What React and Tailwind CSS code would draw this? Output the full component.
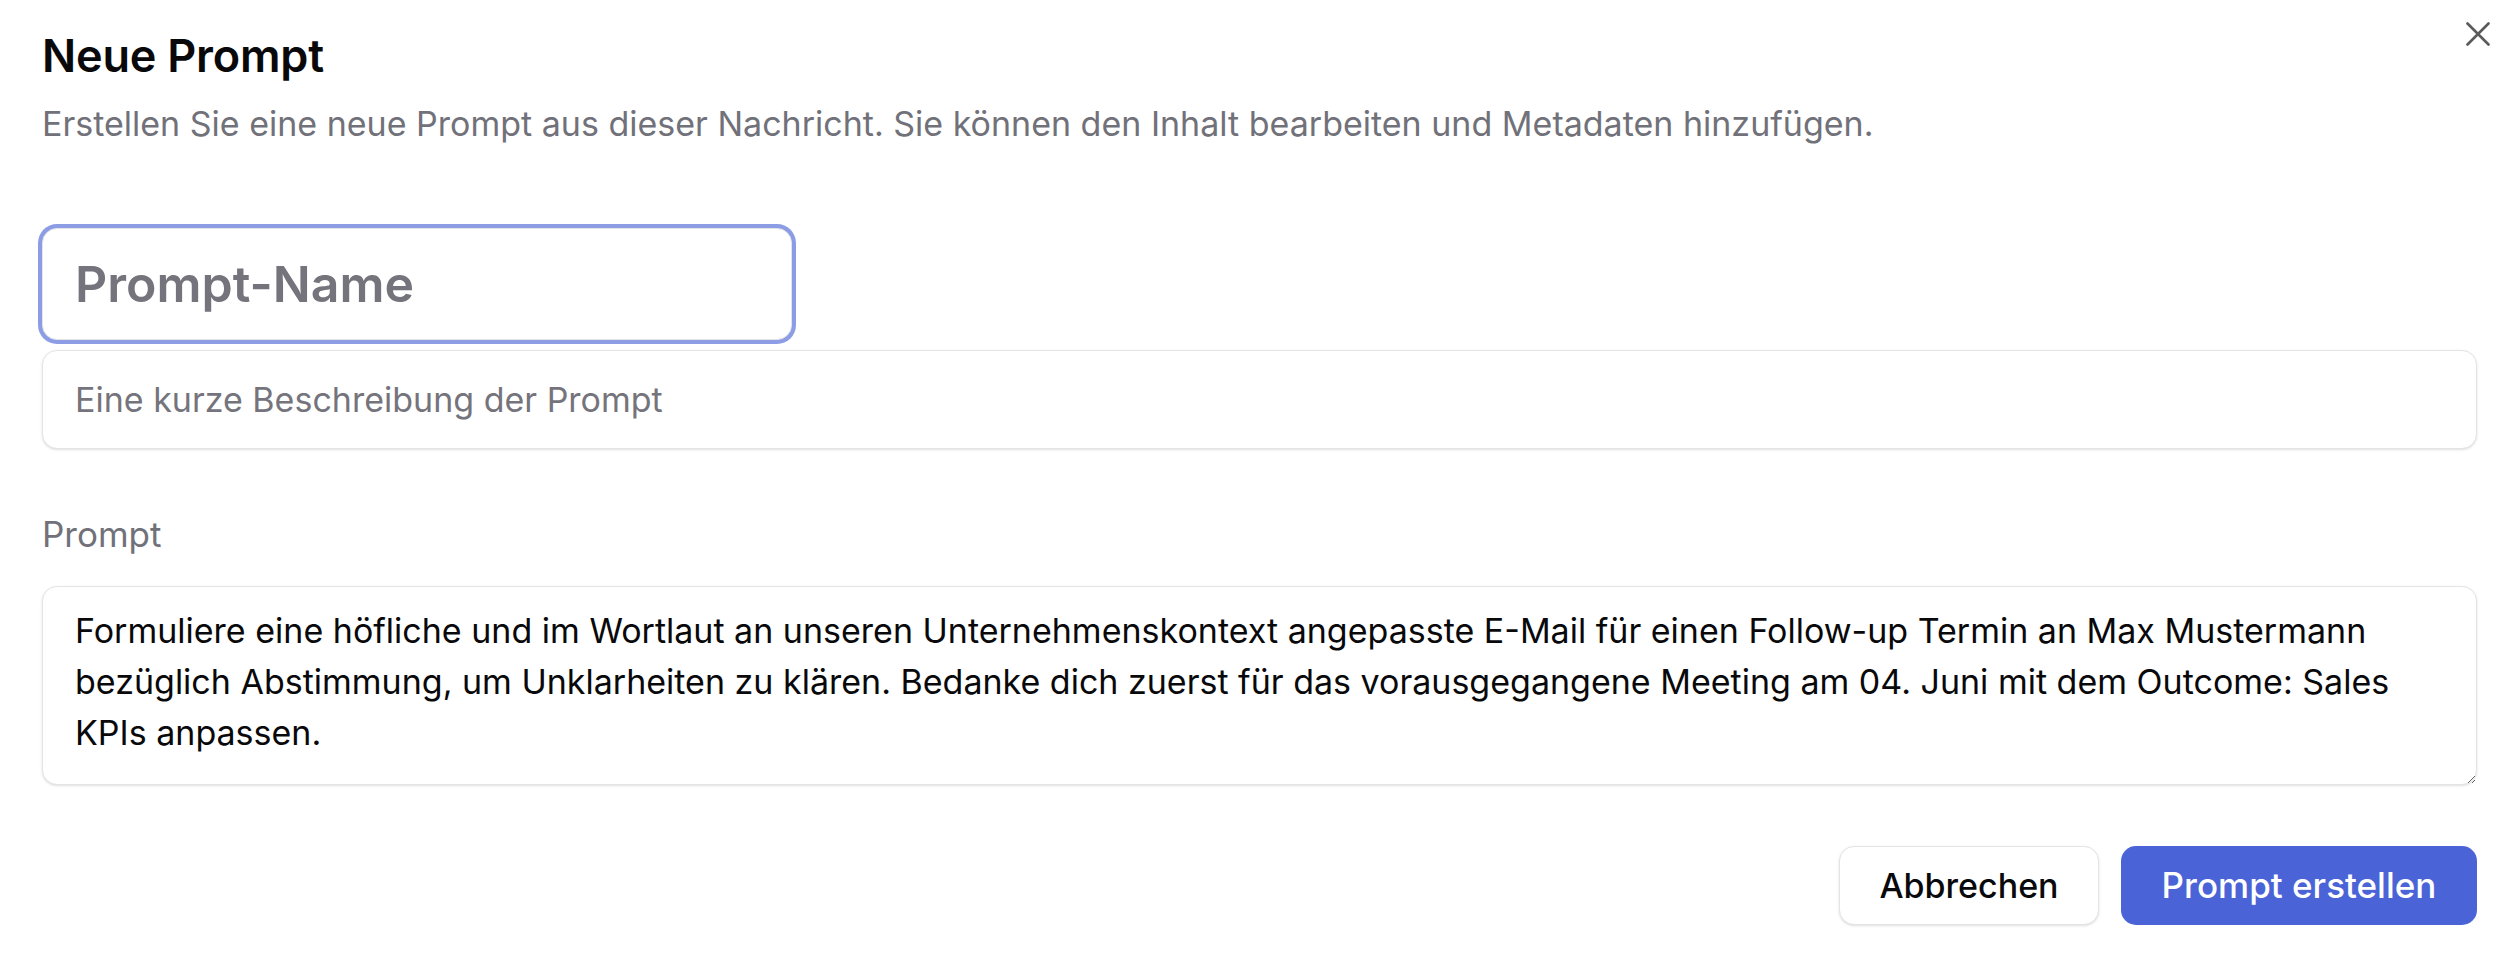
import { useState } from "react";

const PROMPT_TEXT =
  "Formuliere eine höfliche und im Wortlaut an unseren Unternehmenskontext angepasste E-Mail für einen Follow-up Termin an Max Mustermann bezüglich Abstimmung, um Unklarheiten zu klären. Bedanke dich zuerst für das vorausgegangene Meeting am 04. Juni mit dem Outcome: Sales KPIs anpassen.";

export default function App() {
  const [name, setName] = useState("");
  const [desc, setDesc] = useState("");
  const [text, setText] = useState(PROMPT_TEXT);

  return (
    <div className="relative min-h-screen w-full bg-white pl-[42px] pr-[39px] pt-[29px] font-['Inter','Liberation_Sans',sans-serif] text-[#09090b]">
      {/* Close */}
      <button className="absolute right-[26px] top-[22px] text-[#5a5a5a]" aria-label="Schließen">
        <svg width="24" height="24" viewBox="0 0 24 24" fill="none" stroke="currentColor" strokeWidth="2.6" strokeLinecap="round">
          <path d="M1.5 1.5 22.5 22.5" />
          <path d="M22.5 1.5 1.5 22.5" />
        </svg>
      </button>

      {/* Header */}
      <h2 className="text-[45px] font-semibold leading-[53px] tracking-[-0.2px]">Neue Prompt</h2>
      <p className="mt-[18px] text-[34px] leading-[48px] text-[#71717a]">
        Erstellen Sie eine neue Prompt aus dieser Nachricht. Sie können den Inhalt bearbeiten und Metadaten hinzufügen.
      </p>

      {/* Name */}
      <input
        type="text"
        value={name}
        onChange={(e) => setName(e.target.value)}
        placeholder="Prompt-Name"
        className="mt-[80px] block h-[112px] w-[750px] rounded-[15px] border border-[#e4e4e7] bg-white px-[32px] text-[50px] font-semibold text-[#09090b] shadow-sm outline-none ring-4 ring-[#8c9de6] placeholder:text-[#75747c]"
      />

      {/* Description */}
      <input
        type="text"
        value={desc}
        onChange={(e) => setDesc(e.target.value)}
        placeholder="Eine kurze Beschreibung der Prompt"
        className="mt-[10px] block h-[99px] w-full rounded-[15px] border border-[#e4e4e7] bg-white px-[32px] text-[34px] text-[#09090b] shadow-sm outline-none placeholder:text-[#75747c]"
      />

      {/* Prompt */}
      <label className="mt-[61px] block text-[35px] leading-[48px] text-[#71717a]">Prompt</label>
      <textarea
        value={text}
        onChange={(e) => setText(e.target.value)}
        className="mt-[28px] block h-[199px] w-full rounded-[15px] border border-[#e4e4e7] bg-white px-[32px] pt-[18px] text-[34px] leading-[51px] text-[#09090b] shadow-sm outline-none"
      />

      {/* Actions */}
      <div className="mt-[61px] flex justify-end gap-[22px]">
        <button className="h-[79px] w-[260px] rounded-[15px] border border-[#e4e4e7] bg-white text-[34px] font-medium text-[#09090b] shadow-sm">
          Abbrechen
        </button>
        <button className="h-[79px] w-[356px] rounded-[15px] bg-[#4a63d6] text-[35px] font-medium text-white">
          Prompt erstellen
        </button>
      </div>
    </div>
  );
}
